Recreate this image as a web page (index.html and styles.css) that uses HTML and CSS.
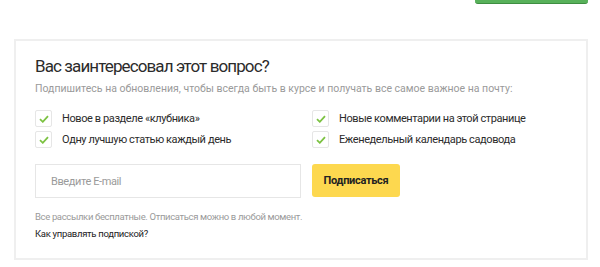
FILE: index.html
```html
<!DOCTYPE html>
<html>
<head>
    <title>Подписка</title>
    <link rel="stylesheet" href="styles.css">
</head>
<body>
    <div class="top-bar">
        <div class="green-button"></div>
    </div>

    <div class="subscribe-box">
        <h2 class="subscribe-title">Вас заинтересовал этот вопрос?</h2>
        <p class="subscribe-lead">Подпишитесь на обновления, чтобы всегда быть в курсе и получать все самое важное на почту:</p>

        <ul class="option-list">
            <li class="option"><span class="check-box"><svg width="10" height="8" viewBox="0 0 10 8"><path d="M1 4.2 L3.8 6.8 L9 1.2" fill="none" stroke="#7cc242" stroke-width="1.8"/></svg></span>Новое в разделе «клубника»</li>
            <li class="option"><span class="check-box"><svg width="10" height="8" viewBox="0 0 10 8"><path d="M1 4.2 L3.8 6.8 L9 1.2" fill="none" stroke="#7cc242" stroke-width="1.8"/></svg></span>Новые комментарии на этой странице</li>
            <li class="option"><span class="check-box"><svg width="10" height="8" viewBox="0 0 10 8"><path d="M1 4.2 L3.8 6.8 L9 1.2" fill="none" stroke="#7cc242" stroke-width="1.8"/></svg></span>Одну лучшую статью каждый день</li>
            <li class="option"><span class="check-box"><svg width="10" height="8" viewBox="0 0 10 8"><path d="M1 4.2 L3.8 6.8 L9 1.2" fill="none" stroke="#7cc242" stroke-width="1.8"/></svg></span>Еженедельный календарь садовода</li>
        </ul>

        <form class="subscribe-form">
            <input type="text" class="email-input" placeholder="Введите E-mail">
            <button type="button" class="subscribe-button">Подписаться</button>
        </form>

        <p class="subscribe-note">Все рассылки бесплатные. Отписаться можно в любой момент.</p>
        <a class="subscribe-help" href="#">Как управлять подпиской?</a>
    </div>
</body>
</html>
```

FILE: styles.css
```css
body {
    margin: 0;
    background-color: #FFFFFF;
    font-family: Roboto, "Noto Sans", sans-serif;
    color: #222222;
}
.top-bar {
    display: flex;
    justify-content: flex-end;
    height: 39px;
    padding-right: 12px;
}
.green-button {
    width: 113px;
    height: 30px;
    margin-top: -27px;
    background-color: #58b15a;
    border-bottom: 1px solid #3e8e41;
    border-radius: 3px;
}
.subscribe-box {
    width: 532px;
    margin-left: 14px;
    border: 2px solid #EFEFEF;
    padding: 14px 19px 17px 19px;
}
.subscribe-title {
    margin: 0;
    font-size: 17px;
    font-weight: normal;
    line-height: 22px;
    letter-spacing: -0.9px;
    color: #2B2B2B;
}
.subscribe-lead {
    margin: 5px 0 0 0;
    font-size: 10.5px;
    line-height: 14px;
    color: #9A9A9A;
}
.option-list {
    display: grid;
    grid-template-columns: 277px 1fr;
    row-gap: 4px;
    list-style-type: none;
    margin: 14px 0 0 0;
    padding: 0;
}
.option {
    display: flex;
    align-items: center;
    font-size: 11px;
    line-height: 17px;
    letter-spacing: -0.4px;
    color: #2B2B2B;
}
.check-box {
    display: flex;
    align-items: center;
    justify-content: center;
    width: 15px;
    height: 15px;
    border: 1px solid #E6E6E6;
    border-radius: 2px;
    margin-right: 10px;
}
.subscribe-form {
    display: flex;
    gap: 11px;
    margin-top: 16px;
}
.email-input {
    box-sizing: border-box;
    width: 266px;
    height: 34px;
    border: 1px solid #E6E6E6;
    padding: 0 15px;
    font-family: inherit;
    font-size: 11px;
    letter-spacing: -0.4px;
    color: #2B2B2B;
}
.email-input::placeholder {
    color: #9A9A9A;
}
.subscribe-button {
    width: 88px;
    height: 33px;
    background-color: #FDD84F;
    border: none;
    border-radius: 3px;
    font-family: inherit;
    font-size: 11px;
    font-weight: bold;
    letter-spacing: -0.3px;
    color: #222222;
}
.subscribe-note {
    margin: 12px 0 0 0;
    font-size: 9.5px;
    line-height: 14px;
    letter-spacing: -0.35px;
    color: #9A9A9A;
}
.subscribe-help {
    display: block;
    margin-top: 3px;
    font-size: 9.5px;
    line-height: 14px;
    letter-spacing: -0.3px;
    color: #222222;
    text-decoration: none;
}
```
